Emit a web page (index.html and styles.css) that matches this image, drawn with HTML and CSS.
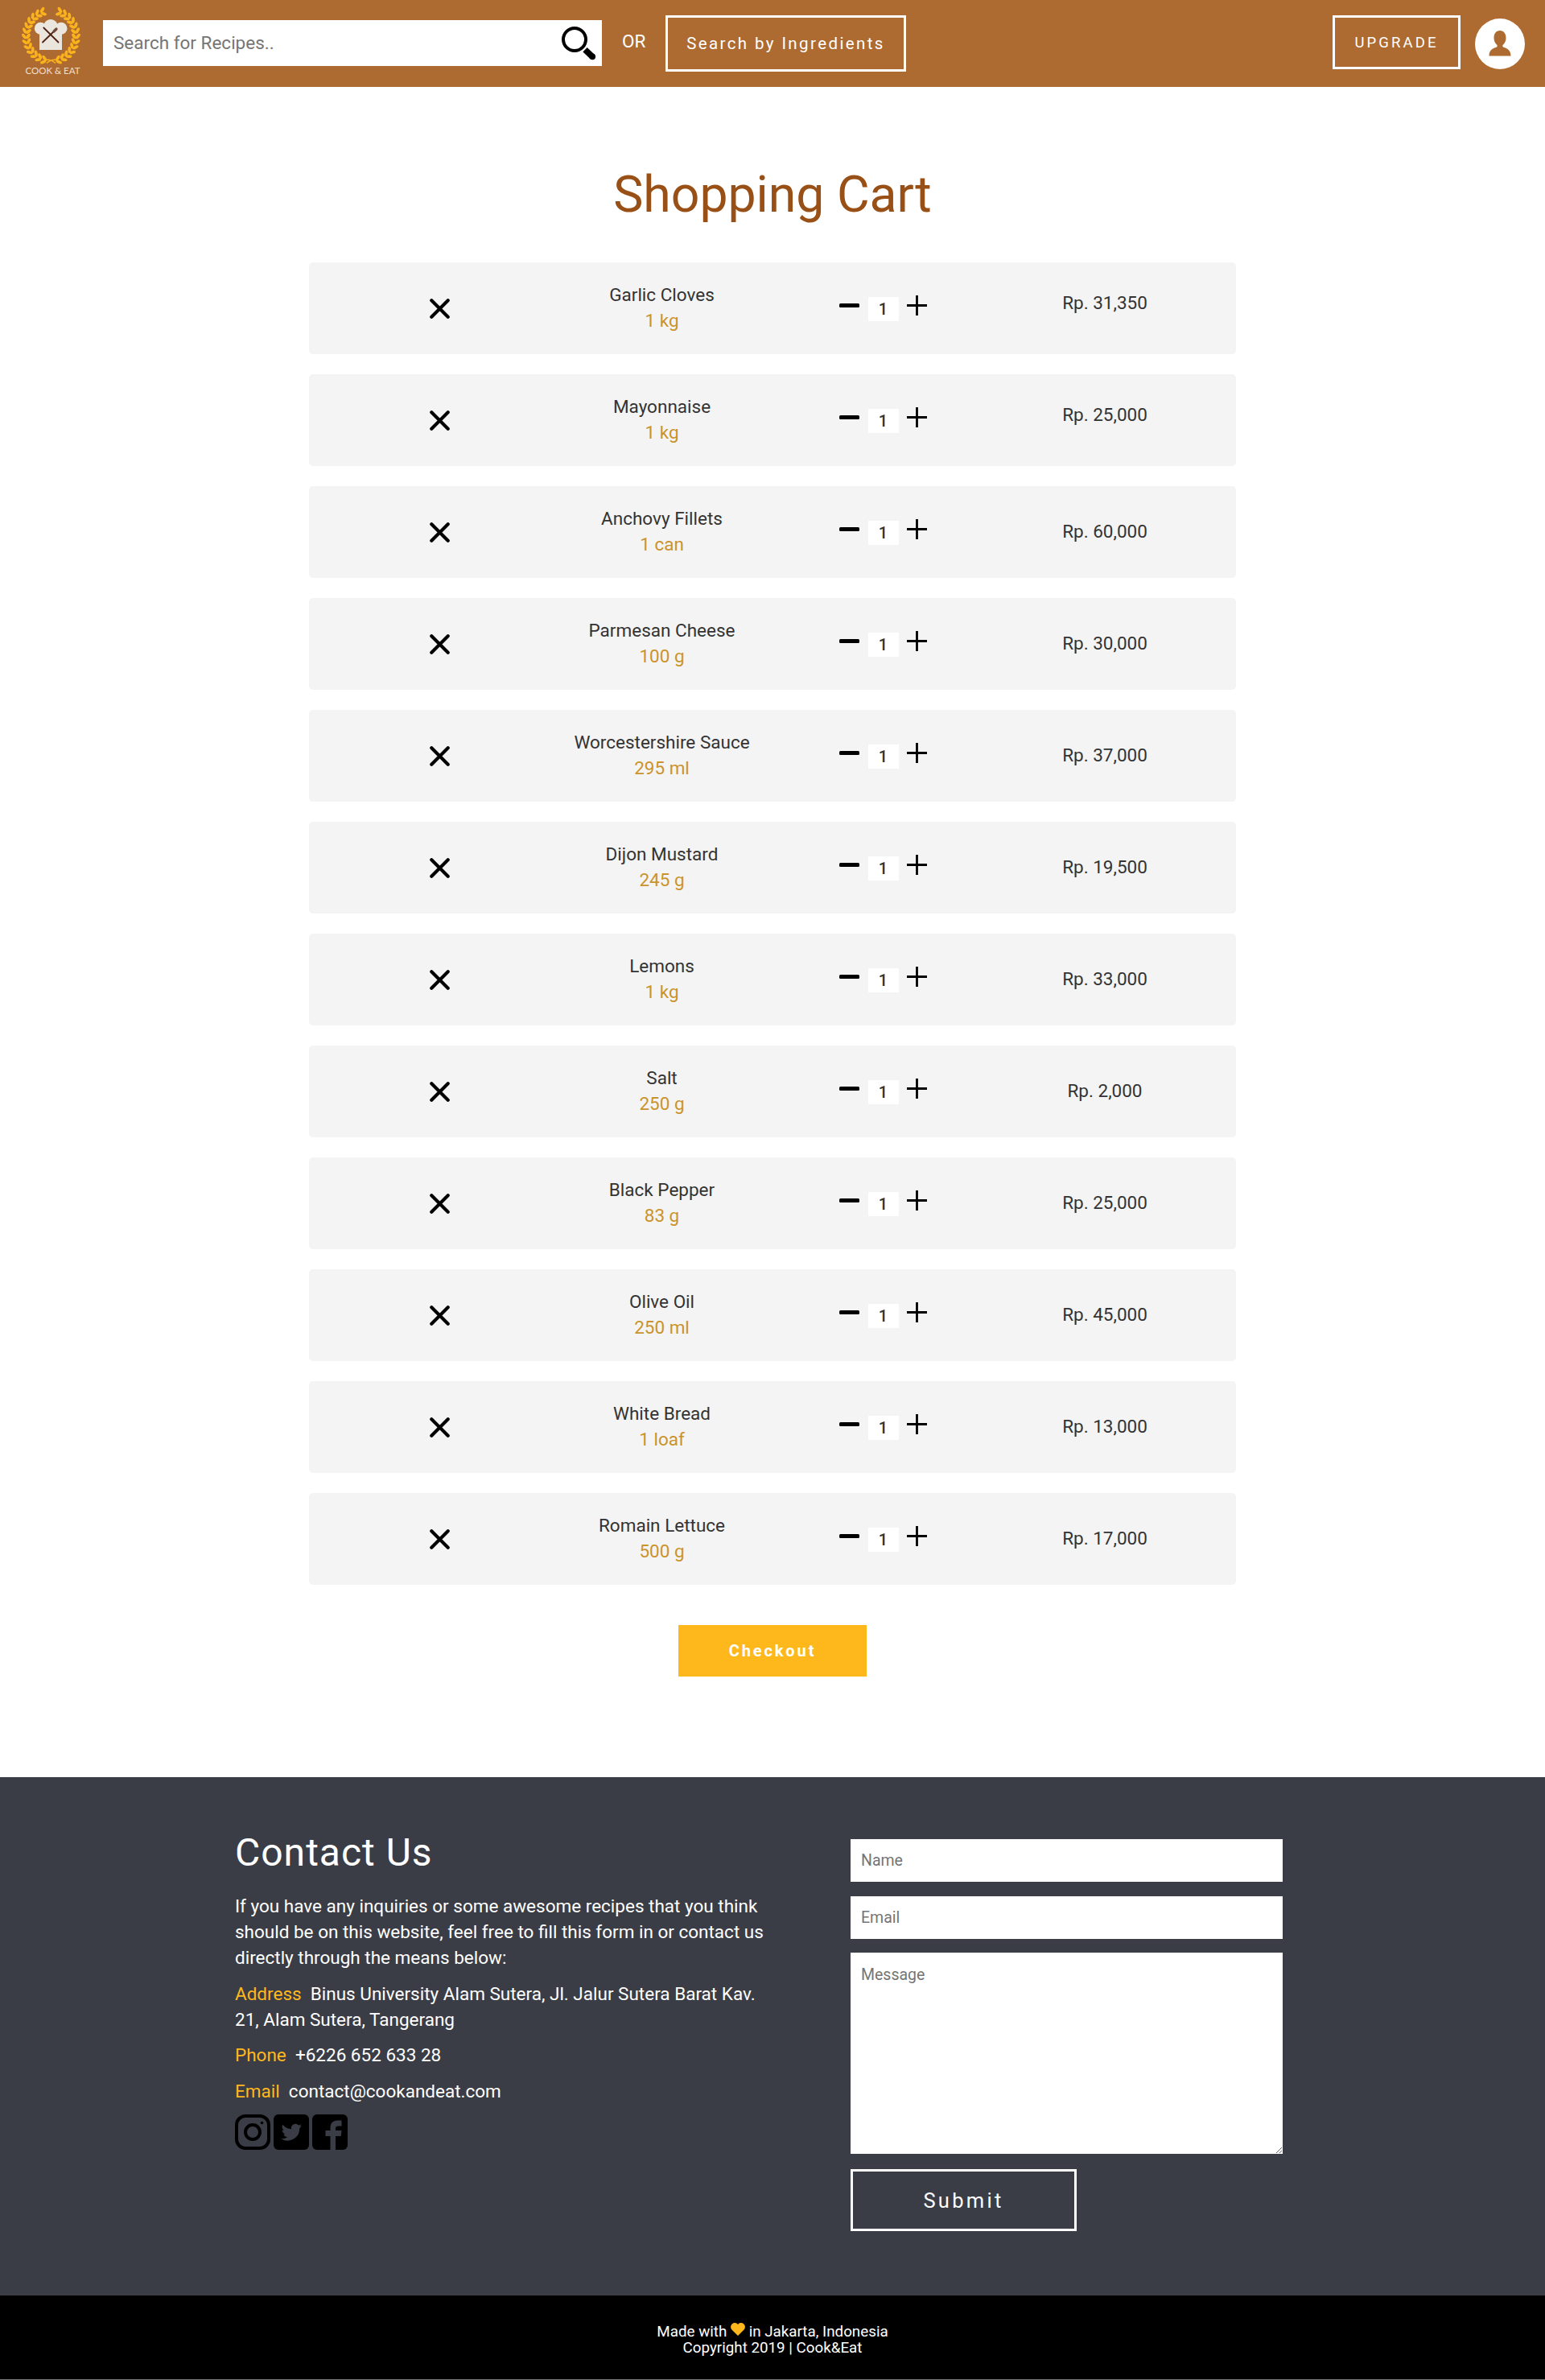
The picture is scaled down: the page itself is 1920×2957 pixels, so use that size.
FILE: index.html
```html
<!DOCTYPE html>
<html lang="en">
<head>
<meta charset="utf-8">
<title>Cook &amp; Eat - Shopping Cart</title>
<link rel="stylesheet" href="styles.css">
</head>
<body>
<svg width="0" height="0" class="sprite" aria-hidden="true">
  <symbol id="remove" viewBox="0 0 24 24"><path d="M2.200 2.200 21.800 21.800M21.800 2.200 2.200 21.800" stroke="#000" stroke-width="4" stroke-linecap="round"/></symbol>
  <symbol id="minus" viewBox="0 0 25 25"><rect y="10" width="25" height="5" rx="1.5"/></symbol>
  <symbol id="plus" viewBox="0 0 25 25"><path d="M12.5 0V25M0 12.5H25" stroke="#000" stroke-width="2.8"/></symbol>
</svg>
<header class="topbar">
  <svg class="logo" viewBox="0 0 76 88">
    <g id="wreath"></g>
    <path d="M32 70.500Q38 65 45 66.500M43 70.500Q37 65 30 66.500" fill="none" stroke="#fbb31d" stroke-width="1.500"/>
    <g fill="#eae6dd"><circle cx="24.300" cy="27.300" r="7.500"/><circle cx="37" cy="25" r="9"/><circle cx="50" cy="27.300" r="7.500"/><path d="M23 28H51V54H23Z"/></g>
    <path d="M28.300 26.500 46.500 44.500M44 28 27 44.500" stroke="#4e2214" stroke-width="1.800" stroke-linecap="round"/>
    <path d="M41 31 44 28" stroke="#704838" stroke-width="3.200" stroke-linecap="round"/>
    <text x="39.500" y="84" text-anchor="middle" textLength="68" lengthAdjust="spacingAndGlyphs">COOK &amp; EAT</text>
  </svg>
  <div class="search">
    <input type="text" placeholder="Search for Recipes..">
    <svg class="glass" viewBox="0 0 43 42"><circle cx="16" cy="16" r="14" fill="none" stroke="#000" stroke-width="4"/><path d="M29 28.800 38 37.300" stroke="#000" stroke-width="7.600"/><circle cx="38.200" cy="37.300" r="3.900"/></svg>
  </div>
  <span class="or">OR</span>
  <button class="outline ingredients">Search by Ingredients</button>
  <button class="outline upgrade">UPGRADE</button>
  <svg class="avatar" viewBox="0 0 62 63"><ellipse cx="31" cy="31.500" rx="31" ry="31.500" fill="#fff"/><path d="M31 15c5 0 7.500 4 7.500 9 0 4-1.500 6.500-3.500 8.500-1.300 1.500-.8 2.500.5 3.200 4.500 1.500 9 3.300 9 10.800H17.500c0-7.500 4.500-9.300 9-10.800 1.300-.7 1.800-1.700.5-3.200-2-2-3.500-4.500-3.500-8.500 0-5 2.500-9 7.500-9Z" fill="#ae6b31"/></svg>
</header>
<main>
  <h1>Shopping Cart</h1>
  <div class="cart" id="cart"></div>
  <button class="checkout">Checkout</button>
</main>
<section class="contact">
  <div class="info">
    <h2>Contact Us</h2>
    <p>If you have any inquiries or some awesome recipes that you think should be on this website, feel free to fill this form in or contact us directly through the means below:</p>
    <p><b>Address</b> &nbsp;Binus University Alam Sutera, Jl. Jalur Sutera Barat Kav. 21, Alam Sutera, Tangerang</p>
    <p><b>Phone</b> &nbsp;+6226 652 633 28</p>
    <p><b>Email</b> &nbsp;contact@cookandeat.com</p>
    <div class="social">
      <svg viewBox="0 0 44 44"><rect x="2" y="2" width="40" height="40" rx="11" fill="none" stroke="#000" stroke-width="4"/><circle cx="22" cy="22" r="9" fill="none" stroke="#000" stroke-width="4"/><circle cx="33.500" cy="10.500" r="1.800"/></svg>
      <svg viewBox="0 0 44 44"><rect width="44" height="44" rx="6"/><path transform="translate(9.500 11.500) scale(1.060)" d="M24 2.600a10 10 0 0 1-2.800.8 5 5 0 0 0 2.200-2.700 10 10 0 0 1-3.100 1.200 4.900 4.900 0 0 0-8.400 4.500A14 14 0 0 1 1.700 1.200a4.900 4.900 0 0 0 1.500 6.600 5 5 0 0 1-2.200-.6c0 2.400 1.700 4.400 3.900 4.900a5 5 0 0 1-2.200.1 4.900 4.900 0 0 0 4.600 3.400A9.900 9.900 0 0 1 0 17.600 14 14 0 0 0 21.500 5.200 10 10 0 0 0 24 2.600Z" fill="#3a3d46"/></svg>
      <svg viewBox="0 0 44 44"><rect width="44" height="44" rx="6"/><path d="M22.500 44V27H16.500v-7h6v-3c0-6 3-9.500 9-9.500h5V14.500h-4c-2.500 0-3.500 1-3.500 3V20h7.500l-.7 7H29v17Z" fill="#3a3d46"/></svg>
    </div>
  </div>
  <form class="form">
    <input type="text" placeholder="Name">
    <input type="text" placeholder="Email">
    <textarea placeholder="Message"></textarea>
    <button type="button" class="outline submit">Submit</button>
  </form>
</section>
<footer>
  <div>Made with <svg class="heart" viewBox="0 0 18 16"><path d="M9 16 1.200 8.200A4.700 4.700 0 0 1 9 1.900a4.700 4.700 0 0 1 7.800 6.300Z" fill="#ffb81c"/></svg> in Jakarta, Indonesia</div>
  <div>Copyright 2019 | Cook&amp;Eat</div>
</footer>
<script src="app.js"></script>
</body>
</html>
```
FILE: styles.css
```css
* { box-sizing: border-box; }
body { margin: 0; font-family: Roboto, "Liberation Sans", sans-serif; font-size: 22.5px; color: #333; background: #fff; }
input, textarea, button { font-family: inherit; border: 0; border-radius: 0; outline: 0; margin: 0; }
.sprite { position: absolute; }
.topbar { height: 108px; background: #ae6b31; display: flex; align-items: flex-start; color: #fff; }
.logo { width: 76px; height: 88px; margin: 8px 26px 0; flex: none; }
.logo text { font: 12px Lato, sans-serif; fill: #f3ddc8; }
.search { width: 620px; height: 57px; margin-top: 25px; background: #fff; display: flex; align-items: center; padding: 0 7px 0 13px; }
.search input { flex: 1; padding: 0 0 2px; font-size: 22.500px; height: 55px; }
.search input::placeholder { color: #757575; }
.glass { width: 43px; height: 42px; }
.or { margin: 38px 24px 0 25px; line-height: 26px; width: 30px; }
.outline { background: none; border: 3px solid #fff; color: #fff; }
.ingredients { width: 299px; height: 70px; margin-top: 19px; font-size: 20.500px; font-weight: 400; letter-spacing: 2.400px; padding: 0; }
.upgrade { width: 159px; height: 67px; margin: 19px 18px 0 auto; font-size: 18.500px; letter-spacing: 3.100px; padding: 0; }
.avatar { width: 62px; height: 63px; margin: 23px 25px 0 0; }
main { height: 2100px; display: flex; flex-direction: column; align-items: center; }
h1 { margin: 91px 0 42px; font-size: 62.500px; line-height: 85px; font-weight: 400; color: #985017; }
.cart { width: 1152px; display: flex; flex-direction: column; gap: 25px; }
.row { height: 114px; background: #f4f4f4; border-radius: 5px; display: grid; grid-template-columns: 324px 229px 321px 230px; text-align: center; line-height: 32px; }
.remove { width: 25px; height: 25px; margin: 45px auto 0; }
.name { padding-top: 24px; white-space: nowrap; }
.name span { display: block; color: #cb932b; }
.qty { display: flex; justify-content: center; padding: 43px 1px 0 0; }
.qty svg { width: 25px; height: 25px; margin-top: -2px; }
.qty input { width: 38px; height: 30px; margin: 0 10px 0 11px; padding: 0; text-align: center; font-size: 20px; font-weight: 500; color: #333; background: #fff; }
.price { padding-top: 40px; }
.row:nth-child(-n+2) .price { padding-top: 34px; }
.checkout { width: 234px; height: 64px; margin-top: 50px; padding: 0 0 1px; background: #ffb81c; color: #fff; font-size: 20px; font-weight: 700; letter-spacing: 2.900px; }
.contact { height: 644px; background: #3a3d46; color: #fff; padding: 65px 0 0 292px; display: flex; }
.info { width: 670px; margin-right: 95px; }
.contact h2 { font-size: 48px; line-height: 58px; font-weight: 400; letter-spacing: 1px; margin: 0 0 21px; }
.contact p { margin: 0 0 12.7px; line-height: 32px; }
.contact b { font-weight: 400; color: #ffb81c; }
.social { display: flex; gap: 4px; }
.social svg { width: 44px; height: 44px; }
.form { width: 537px; padding-top: 12px; display: flex; flex-direction: column; align-items: flex-start; }
.form input { width: 100%; height: 53px; margin-bottom: 18px; padding: 0 13px; font-size: 19.5px; }
.form input:nth-child(2) { margin-bottom: 17px; }
.form textarea { width: 100%; height: 250px; margin-bottom: 19px; padding: 16px 13px; font-size: 19.5px; }
.submit { width: 281px; height: 77px; font-size: 25.500px; letter-spacing: 3.300px; }
footer { height: 105px; background: #000; color: #fff; text-align: center; font-size: 18.800px; line-height: 20px; padding-top: 34px; border-bottom: 1px solid #777; }
.heart { width: 18px; height: 16px; vertical-align: 1px; }
```
FILE: app.js
```
const items = [
  ["Garlic Cloves", "1 kg", "31,350"], ["Mayonnaise", "1 kg", "25,000"],
  ["Anchovy Fillets", "1 can", "60,000"], ["Parmesan Cheese", "100 g", "30,000"],
  ["Worcestershire Sauce", "295 ml", "37,000"], ["Dijon Mustard", "245 g", "19,500"],
  ["Lemons", "1 kg", "33,000"], ["Salt", "250 g", "2,000"],
  ["Black Pepper", "83 g", "25,000"], ["Olive Oil", "250 ml", "45,000"],
  ["White Bread", "1 loaf", "13,000"], ["Romain Lettuce", "500 g", "17,000"]
];
document.getElementById("cart").innerHTML = items.map(([name, size, price]) => `
  <div class="row">
    <svg class="remove"><use href="#remove"/></svg>
    <div class="name">${name}<span>${size}</span></div>
    <div class="qty"><svg><use href="#minus"/></svg><input value="1"><svg><use href="#plus"/></svg></div>
    <div class="price">Rp. ${price}</div>
  </div>`).join("");

// Laurel leaves in pairs along both sides of the logo's wreath
let leaves = "";
for (const side of [-1, 1]) {
  for (let i = 0; i < 13; i++) {
    const t = 17 + i * 12;
    const a = t * Math.PI / 180;
    const x = 37.5 + side * Math.sin(a) * 31, y = 36.5 + Math.cos(a) * 31.5;
    leaves += `<g transform="translate(${x} ${y}) rotate(${-side * t})">
      <ellipse rx="3.900" ry="1.900" transform="translate(0 2.500) rotate(${side * 38})"/>
      <ellipse rx="3.900" ry="1.900" transform="translate(0 -2.500) rotate(${side * -38})"/></g>`;
  }
}
document.getElementById("wreath").innerHTML = `<g fill="#fbb31d">${leaves}</g>`;
```
